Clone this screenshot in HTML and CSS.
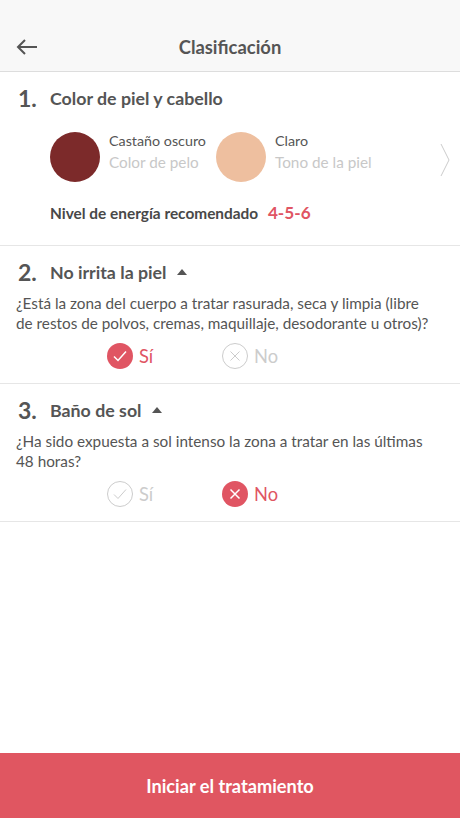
FILE: index.html
```html
<!DOCTYPE html>
<html lang="es">
<head>
    <meta charset="UTF-8">
    <meta name="viewport" content="width=device-width, initial-scale=1.0">
    <title>Clasificación</title>
    <link rel="stylesheet" href="styles.css">
</head>
<body>
    <div class="app">
        <div class="topbar">
            <svg class="back" width="22" height="16" viewBox="0 0 22 16">
                <path d="M21 8H2M9 1L2 8l7 7" fill="none" stroke="#555" stroke-width="2"/>
            </svg>
            <h1>Clasificación</h1>
        </div>

        <div class="section">
            <div class="sec-head">
                <span class="num">1.</span>
                <span class="sec-title">Color de piel y cabello</span>
            </div>
            <div class="swatches">
                <div class="swatch">
                    <div class="dot hair"></div>
                    <div class="sw-text">
                        <div class="sw-name">Castaño oscuro</div>
                        <div class="sw-label">Color de pelo</div>
                    </div>
                </div>
                <div class="swatch">
                    <div class="dot skin"></div>
                    <div class="sw-text">
                        <div class="sw-name">Claro</div>
                        <div class="sw-label">Tono de la piel</div>
                    </div>
                </div>
                <svg class="chev" width="10" height="34" viewBox="0 0 10 34">
                    <path d="M1 1l8 16-8 16" fill="none" stroke="#ccc" stroke-width="1"/>
                </svg>
            </div>
            <div class="energy">Nivel de energía recomendado <span class="level">4-5-6</span></div>
        </div>

        <div class="section">
            <div class="sec-head">
                <span class="num">2.</span>
                <span class="sec-title">No irrita la piel</span>
                <span class="caret"></span>
            </div>
            <p class="question">¿Está la zona del cuerpo a tratar rasurada, seca y limpia (libre de restos de polvos, cremas, maquillaje, desodorante u otros)?</p>
            <div class="options">
                <div class="opt active">
                    <svg width="26" height="26" viewBox="0 0 26 26"><circle cx="13" cy="13" r="13" fill="#e05563"/><path d="M7 13.5l4 4 8-9" fill="none" stroke="#fff" stroke-width="1.5"/></svg>
                    <span>Sí</span>
                </div>
                <div class="opt">
                    <svg width="26" height="26" viewBox="0 0 26 26"><circle cx="13" cy="13" r="12.5" fill="none" stroke="#ccc"/><path d="M8.5 8.5l9 9M17.5 8.5l-9 9" stroke="#ccc" stroke-width="1"/></svg>
                    <span>No</span>
                </div>
            </div>
        </div>

        <div class="section">
            <div class="sec-head">
                <span class="num">3.</span>
                <span class="sec-title">Baño de sol</span>
                <span class="caret"></span>
            </div>
            <p class="question">¿Ha sido expuesta a sol intenso la zona a tratar en las últimas 48 horas?</p>
            <div class="options">
                <div class="opt">
                    <svg width="26" height="26" viewBox="0 0 26 26"><circle cx="13" cy="13" r="12.5" fill="none" stroke="#ccc"/><path d="M7 13.5l4 4 8-9" fill="none" stroke="#ccc" stroke-width="1"/></svg>
                    <span>Sí</span>
                </div>
                <div class="opt active">
                    <svg width="26" height="26" viewBox="0 0 26 26"><circle cx="13" cy="13" r="13" fill="#e05563"/><path d="M8.5 8.5l9 9M17.5 8.5l-9 9" stroke="#fff" stroke-width="1.5"/></svg>
                    <span>No</span>
                </div>
            </div>
        </div>

        <div class="spacer"></div>
        <button class="start">Iniciar el tratamiento</button>
    </div>
</body>
</html>
```

FILE: styles.css
```css
* { box-sizing: border-box; }
body {
    margin: 0;
    font-family: Lato, "Open Sans", sans-serif;
    color: #555;
    background: #fff;
}
.app {
    height: 818px;
    display: flex;
    flex-direction: column;
}
.topbar {
    height: 72px;
    background: #f8f8f8;
    border-bottom: 1px solid #ddd;
    display: flex;
    align-items: center;
    padding: 22px 16px 0;
}
.topbar h1 {
    flex: 1;
    margin: 0 22px 0 0;
    text-align: center;
    font-size: 18.4px;
    font-weight: 700;
    color: #555;
}
.back { display: block; }
.section {
    border-bottom: 1px solid #e6e6e6;
    padding: 12px 28px 0 16px;
}
.sec-head {
    display: flex;
    align-items: center;
    height: 28px;
}
.num {
    width: 34px;
    padding-left: 2px;
    font-size: 23px;
    font-weight: 700;
    color: #555;
}
.sec-title {
    font-size: 17.8px;
    font-weight: 700;
    color: #555;
}
.caret {
    width: 0;
    height: 0;
    margin-left: 10px;
    border-left: 5px solid transparent;
    border-right: 5px solid transparent;
    border-bottom: 6px solid #555;
}
.swatches {
    display: flex;
    align-items: flex-start;
    margin-right: -12px;
    padding: 20px 0 0 34px;
}
.swatch {
    display: flex;
    align-items: flex-start;
    width: 166px;
}
.dot {
    width: 50px;
    height: 50px;
    border-radius: 50%;
    margin-right: 9px;
}
.hair { background: #7c2a2a; }
.skin { background: #eebf9f; }
.sw-text { margin-top: -1px; }
.sw-name { font-size: 14.3px; color: #555; line-height: 20px; }
.sw-label { font-size: 15.3px; color: #c8c8c8; line-height: 22px; }
.chev { margin: 11px -6px 0 auto; }
.energy {
    padding: 21px 0 22px 34px;
    font-size: 15.4px;
    line-height: 19px;
    font-weight: 700;
    color: #484848;
}
.level {
    margin-left: 6px;
    font-size: 17.2px;
    color: #e05563;
}
.question {
    margin: 7px 0 0;
    font-size: 15.3px;
    line-height: 20px;
    color: #555;
}
.options {
    display: flex;
    padding: 10px 0 14px 91px;
}
.opt {
    display: flex;
    align-items: center;
    width: 115px;
    font-size: 18.3px;
    color: #ccc;
}
.opt svg { margin-right: 6px; }
.opt.active { color: #e05563; }
.spacer { flex: 1; }
.start {
    height: 65px;
    border: none;
    background: #e05661;
    color: #fff;
    font-family: Lato, sans-serif;
    font-size: 18.2px;
    font-weight: 700;
}
```
